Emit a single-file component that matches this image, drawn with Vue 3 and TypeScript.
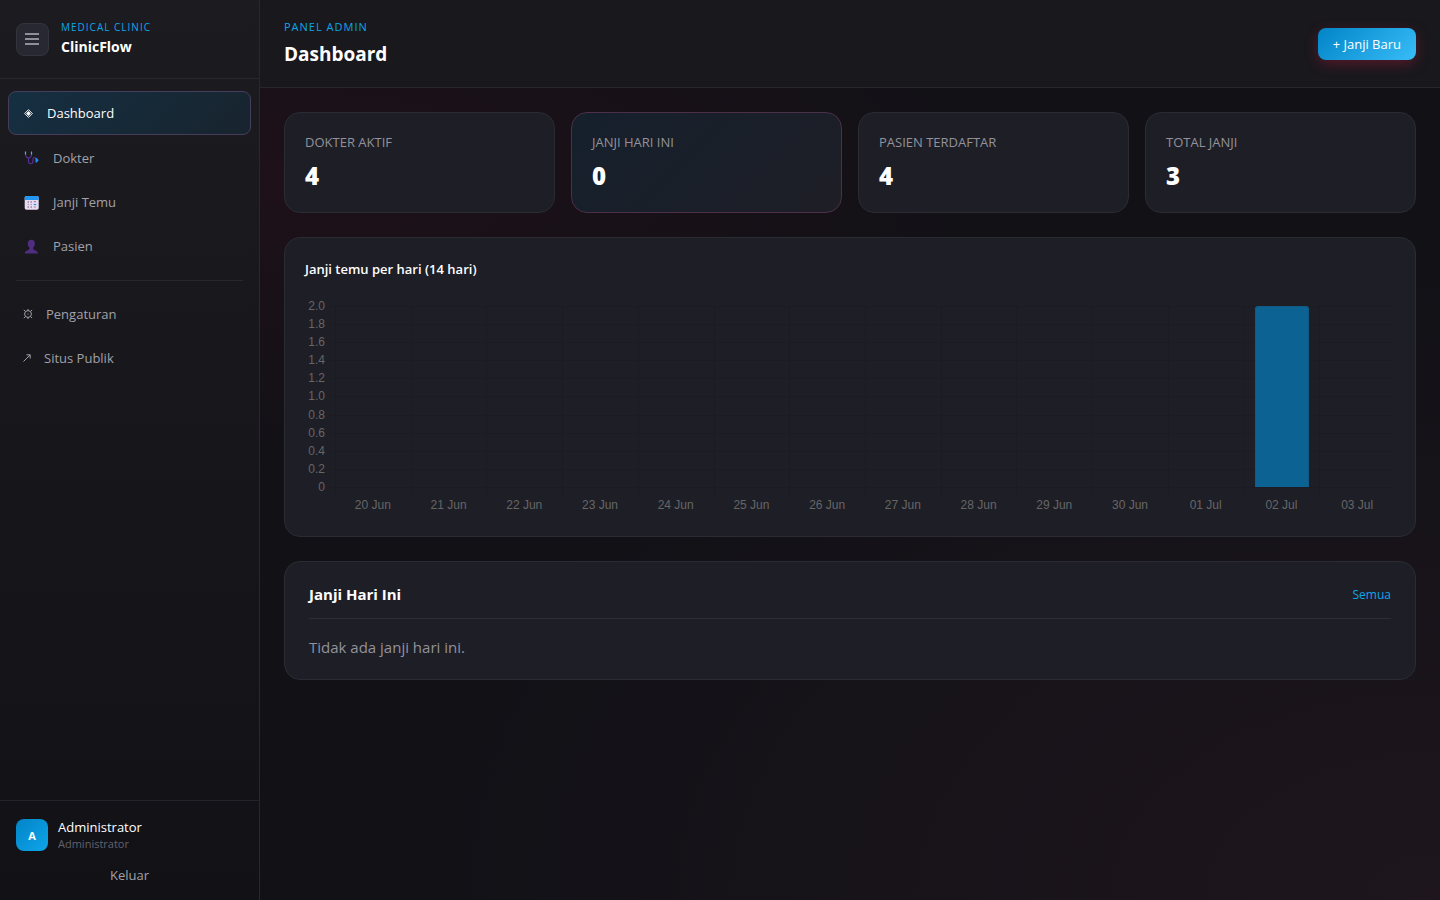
<script setup lang="ts">
interface NavItem { icon: string; label: string; active?: boolean }
interface Stat { label: string; value: number; accent?: boolean }
interface Day { label: string; count: number }

const mainNav: NavItem[] = [
  { icon: 'diamond', label: 'Dashboard', active: true },
  { icon: 'stethoscope', label: 'Dokter' },
  { icon: 'calendar', label: 'Janji Temu' },
  { icon: 'person', label: 'Pasien' },
]
const extraNav: NavItem[] = [
  { icon: 'gear', label: 'Pengaturan' },
  { icon: 'arrow', label: 'Situs Publik' },
]
const stats: Stat[] = [
  { label: 'Dokter Aktif', value: 4 },
  { label: 'Janji Hari Ini', value: 0, accent: true },
  { label: 'Pasien Terdaftar', value: 4 },
  { label: 'Total Janji', value: 3 },
]
const dayLabels: string[] = [
  '20 Jun', '21 Jun', '22 Jun', '23 Jun', '24 Jun', '25 Jun', '26 Jun',
  '27 Jun', '28 Jun', '29 Jun', '30 Jun', '01 Jul', '02 Jul', '03 Jul',
]
const days: Day[] = dayLabels.map((label) => ({ label, count: label === '02 Jul' ? 2 : 0 }))
const maxCount = 2
const ticks: string[] = ['2.0', '1.8', '1.6', '1.4', '1.2', '1.0', '0.8', '0.6', '0.4', '0.2', '0']
const barHeight = (count: number): string => `${(count / maxCount) * 100}%`
</script>

<template>
  <div class="shell">
    <aside class="sidebar">
      <div class="brand">
        <button class="menu" type="button" aria-label="Menu">
          <svg width="15" height="12" viewBox="0 0 15 12"><path d="M0 1h14M0 6h14M0 11h14" stroke="#a1a1aa" stroke-width="2" opacity=".85" /></svg>
        </button>
        <div>
          <div class="eyebrow small">MEDICAL CLINIC</div>
          <div class="brand-name">ClinicFlow</div>
        </div>
      </div>

      <nav class="nav">
        <a v-for="item in mainNav" :key="item.label" href="#" class="item" :class="[item.icon, { active: item.active }]">
          <svg v-if="item.icon === 'diamond'" width="9" height="9" viewBox="0 0 9 9">
            <path d="M4.500.6 8.400 4.500 4.500 8.400.6 4.500Z" fill="none" stroke="#fff" stroke-width=".9" />
            <path d="M4.500 2.100 6.900 4.500 4.500 6.900 2.100 4.500Z" fill="#fff" />
          </svg>
          <svg v-else-if="item.icon === 'stethoscope'" width="15" height="14" viewBox="0 0 15 14">
            <path d="M1.500 3v1c0 1 .4 1.500 1 2L4.500 7.300 6.500 6c.6-.5 1-1 1-2V3M4.500 7.300v2.200c0 2 1 3.300 2.100 3.300S9 11.500 9 9.500V8.300c0-1 .5-1.800 1.500-1.800S12 7.200 12 8" fill="none" stroke="#5b2f9a" stroke-width="1.100" />
            <path d="M1.500 .5v3M7.500 .5v3" stroke="#45b4f5" stroke-width="1.200" />
            <path d="M11.500 7h1.300l1.900 2.300-1.900 2.300h-1.300Z" fill="#2589f5" />
          </svg>
          <svg v-else-if="item.icon === 'calendar'" width="15" height="15" viewBox="0 0 15 15">
            <rect x=".7" y="1" width="14" height="13.800" rx="1.800" fill="#e8dcf0" />
            <path d="M.7 5V2.800A1.800 1.800 0 0 1 2.500 1h10.400a1.800 1.800 0 0 1 1.800 1.800V5Z" fill="#2196f3" />
            <path d="M4.200 6v2M7.200 6v2M4.200 9v1M7.200 9v1M4.200 11v2M7.200 11v2M9.700 6.700h2.300M9.700 12h2.300" stroke="#9a8aa8" stroke-width="1.200" />
            <path d="M9.700 9.500h2.600" stroke="#2196f3" stroke-width="1.200" />
          </svg>
          <svg v-else width="15" height="15" viewBox="0 0 15 15">
            <path d="M7.300 .8c2.200 0 3.600 1.500 3.600 3.800 0 2-.8 3.200-1.800 4.200 0 1.800.8 2.200 2.300 2.600 1.600.4 2.400 1.200 2.400 3.200H.8c0-2 .8-2.800 2.400-3.200 1.500-.4 2.300-.8 2.300-2.600-1-1-1.800-2.200-1.800-4.200C3.700 2.300 5.100.8 7.300.8Z" fill="#4f2d80" />
          </svg>
          <span>{{ item.label }}</span>
        </a>
        <hr class="split" />
        <a v-for="item in extraNav" :key="item.label" href="#" class="item" :class="item.icon">
          <svg v-if="item.icon === 'gear'" width="10" height="10" viewBox="0 0 10 10" fill="none" stroke="#a1a1aa">
            <circle cx="5" cy="5" r="3.400" />
            <path d="M5 0v1.600M5 8.400V10M.8.800l1.600 1.600M7.600 7.600l1.500 1.500M.8 9.200l1.600-1.600M7.600 2.400 9.100.9" />
            <path d="M4.500 5h1" />
          </svg>
          <svg v-else width="8" height="8" viewBox="0 0 8 8" fill="none" stroke="#a1a1aa">
            <path d="M.5 7.500 7 1M3.500.8h3.700v3.700" />
          </svg>
          <span>{{ item.label }}</span>
        </a>
      </nav>

      <div class="account">
        <div class="user">
          <span class="avatar">A</span>
          <div>
            <div class="user-name">Administrator</div>
            <div class="user-role">Administrator</div>
          </div>
        </div>
        <button class="logout" type="button">Keluar</button>
      </div>
    </aside>

    <div class="page">
      <header class="topbar">
        <div>
          <div class="eyebrow">PANEL ADMIN</div>
          <h1>Dashboard</h1>
        </div>
        <button class="primary" type="button">+ Janji Baru</button>
      </header>

      <main class="content">
        <section class="stats">
          <div v-for="s in stats" :key="s.label" class="card stat" :class="{ accent: s.accent }">
            <div class="stat-label">{{ s.label }}</div>
            <div class="stat-value">{{ s.value }}</div>
          </div>
        </section>

        <section class="card chart-card">
          <h2 class="chart-title">Janji temu per hari (14 hari)</h2>
          <div class="chart">
            <div class="y-axis"><span v-for="t in ticks" :key="t">{{ t }}</span></div>
            <div class="plot">
              <div class="rows"><i v-for="t in ticks" :key="t"></i></div>
              <div class="cols">
                <div v-for="d in days" :key="d.label" class="col">
                  <div v-if="d.count" class="bar" :style="{ height: barHeight(d.count) }"></div>
                </div>
              </div>
            </div>
            <div class="x-axis"><span v-for="d in days" :key="d.label">{{ d.label }}</span></div>
          </div>
        </section>

        <section class="card today">
          <div class="today-head">
            <h2>Janji Hari Ini</h2>
            <a href="#">Semua</a>
          </div>
          <p>Tidak ada janji hari ini.</p>
        </section>
      </main>
    </div>
  </div>
</template>

<style>
body {
  margin: 0;
  background: #111116;
}
</style>

<style scoped>
* {
  box-sizing: border-box;
}
.shell {
  display: flex;
  min-height: 100vh;
  font-family: "Open Sans", "Noto Sans", sans-serif;
  font-size: 13px;
  color: #fff;
  background:
    radial-gradient(ellipse 80% 50% at 20% 20%, rgba(120, 15, 45, 0.13), transparent 65%),
    radial-gradient(ellipse 80% 80% at 100% 100%, rgba(120, 55, 75, 0.13), transparent 90%),
    #111116;
}
h1, h2, p {
  margin: 0;
}
a {
  text-decoration: none;
}
button {
  font: inherit;
  cursor: pointer;
}
.sidebar {
  width: 260px;
  flex: none;
  display: flex;
  flex-direction: column;
  border-right: 1px solid #27272c;
  background: linear-gradient(180deg, #1c1c20, #111116);
}
.brand {
  display: flex;
  align-items: center;
  gap: 12px;
  height: 79px;
  padding: 0 16px;
  border-bottom: 1px solid #27272c;
}
.menu {
  display: grid;
  place-items: center;
  width: 33px;
  height: 33px;
  padding: 0;
  border: 1px solid #34343e;
  border-radius: 8px;
  background: #282832;
}
.eyebrow {
  font-size: 11px;
  line-height: 16px;
  letter-spacing: 1px;
  color: #0ea5e9;
}
.eyebrow.small {
  font-size: 10px;
}
.brand-name {
  font-size: 14px;
  line-height: 24px;
  font-weight: 700;
}
.nav {
  display: flex;
  flex-direction: column;
  gap: 2px;
  flex: 1;
  padding: 12px 8px;
}
.item {
  display: flex;
  align-items: center;
  gap: 14px;
  height: 42px;
  padding: 0 16px;
  color: #a1a1aa;
}
.item.active {
  height: 44px;
  border: 1px solid #463d5c;
  border-radius: 8px;
  padding: 0 15px;
  background: linear-gradient(135deg, #152f42, #18242e);
  color: #fff;
}
.item.gear,
.item.arrow {
  gap: 13px;
  padding-left: 15px;
}
.split {
  width: calc(100% - 16px);
  margin: 11px 8px 10px;
  border: 0;
  border-top: 1px solid #27272c;
}
.account {
  padding: 17px 16px 12px;
  border-top: 1px solid #22232b;
}
.user {
  display: flex;
  align-items: center;
  gap: 10px;
}
.avatar {
  display: grid;
  place-items: center;
  width: 32px;
  height: 32px;
  border-radius: 8px;
  background: linear-gradient(135deg, #0284c7, #0ea5e9);
  font-size: 11px;
  font-weight: 700;
}
.user-name {
  line-height: 18px;
}
.user-role {
  font-size: 11px;
  line-height: 16px;
  color: #62626e;
}
.logout {
  display: block;
  width: 100%;
  height: 26px;
  margin-top: 10px;
  padding: 0;
  border: 0;
  background: none;
  color: #a1a1aa;
}
.page {
  flex: 1;
  min-width: 0;
}
.topbar {
  display: flex;
  align-items: center;
  justify-content: space-between;
  height: 88px;
  padding: 0 24px;
  border-bottom: 1px solid #27272c;
  background: rgba(26, 26, 30, 0.85);
}
h1 {
  margin-top: 2px;
  font-size: 19px;
  line-height: 34px;
  font-weight: 700;
}
.topbar .eyebrow {
  padding-top: 2px;
}
.primary {
  height: 32px;
  padding: 0 15px;
  border: 0;
  border-radius: 8px;
  background: linear-gradient(135deg, #0284c7, #38bdf8);
  box-shadow: 0 4px 14px rgba(225, 29, 72, 0.3);
  color: #fff;
}
.content {
  display: flex;
  flex-direction: column;
  gap: 24px;
  padding: 24px;
}
.stats {
  display: grid;
  grid-template-columns: repeat(4, 1fr);
  gap: 16px;
}
.card {
  border: 1px solid #2a2b33;
  border-radius: 16px;
  background: #1e1e26;
}
.stat {
  padding: 20px;
}
.stat.accent {
  border-color: #4c2f48;
  background: linear-gradient(135deg, #15202c, #1e1e26);
}
.stat-label {
  line-height: 18px;
  text-transform: uppercase;
  color: #92929c;
}
.stat-value {
  margin-top: 8px;
  font-size: 24px;
  line-height: 33px;
  font-weight: 800;
}
.chart-card {
  padding: 20px 20px 22px;
}
.chart-title {
  font-size: 13px;
  line-height: 22px;
  font-weight: 600;
}
.chart {
  display: grid;
  grid-template-columns: 24px 1fr;
  margin-top: 17px;
  font-family: "Liberation Sans", Arial, sans-serif;
  font-size: 12px;
  line-height: 18px;
  color: #666;
}
.y-axis {
  display: flex;
  flex-direction: column;
  justify-content: space-between;
  height: 199px;
  padding-right: 4px;
  text-align: right;
}
.plot {
  display: grid;
  align-items: start;
  height: 190px;
  margin-top: 9px;
}
.rows,
.cols {
  grid-area: 1 / 1;
}
.rows {
  display: flex;
  flex-direction: column;
  justify-content: space-between;
  height: 182px;
}
.rows i {
  height: 1px;
  background: #1b1b21;
}
.cols {
  display: grid;
  grid-template-columns: repeat(14, 1fr);
  height: 190px;
  margin-left: 6px;
}
.col {
  display: flex;
  align-items: flex-end;
  justify-content: center;
  padding-bottom: 9px;
  border-left: 1px solid #1b1b21;
}
.bar {
  width: 73%;
  border: 1px solid #115a83;
  border-bottom: 0;
  border-radius: 3px 3px 0 0;
  background: #0c6293;
}
.x-axis {
  grid-column: 2;
  display: grid;
  grid-template-columns: repeat(14, 1fr);
  margin-left: 6px;
  text-align: center;
}
.today {
  padding: 20px 24px;
}
.today-head {
  display: flex;
  align-items: center;
  justify-content: space-between;
  height: 37px;
  padding-bottom: 12px;
  border-bottom: 1px solid #2d2d36;
}
.today-head h2 {
  font-size: 15px;
  line-height: 24px;
  font-weight: 700;
}
.today-head a {
  font-size: 12px;
  color: #0ea5e9;
}
.today p {
  margin-top: 16px;
  font-size: 15px;
  line-height: 24px;
  color: #92929c;
}
</style>
